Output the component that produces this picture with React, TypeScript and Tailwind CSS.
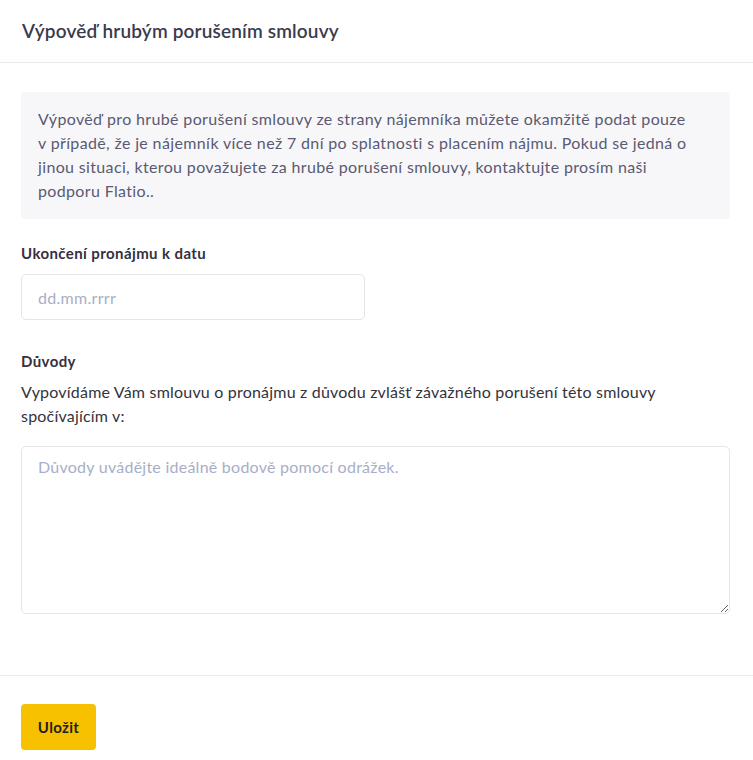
export default function App() {
  const font = { fontFamily: "Lato, 'Noto Sans', sans-serif" };
  return (
    <div className="w-[753px] min-h-[760px] bg-white" style={font}>
      <div className="h-[63px] flex items-center px-[22px] border-b border-[#e9e9ec]">
        <h1 className="text-[19px] font-semibold text-[#3a3a4d] tracking-[0.15px]">Výpověď hrubým porušením smlouvy</h1>
      </div>
      <div className="pl-[21px] pr-[23px] pt-[29px] pb-[61px]">
        <div className="bg-[#f7f7f9] rounded-[4px] pl-[17px] pr-[20px] pt-[15px] pb-[16px] text-[16px] leading-[24px] text-[#5a5a72] whitespace-nowrap tracking-[0.35px]">
          Výpověď pro hrubé porušení smlouvy ze strany nájemníka můžete okamžitě podat pouze
          <br />
          v případě, že je nájemník více než 7 dní po splatnosti s placením nájmu. Pokud se jedná o
          <br />
          jinou situaci, kterou považujete za hrubé porušení smlouvy, kontaktujte prosím naši
          <br />
          podporu Flatio..
        </div>
        <div className="mt-[24px] text-[15px] font-bold text-[#35303f] leading-[20px] tracking-[0.4px]">Ukončení pronájmu k datu</div>
        <input
          type="text"
          placeholder="dd.mm.rrrr"
          className="mt-[11px] w-[344px] h-[46px] border border-[#e4e4ea] rounded-[5px] px-[16px] text-[16px] tracking-[0.3px] placeholder:text-[#a8aec8] outline-none"
        />
        <div className="mt-[31px] text-[15px] font-bold text-[#35303f] leading-[20px] tracking-[0.4px]">Důvody</div>
        <p className="mt-[9px] text-[16px] leading-[24px] text-[#33333d] tracking-[0.2px]">
          Vypovídáme Vám smlouvu o pronájmu z důvodu zvlášť závažného porušení této smlouvy
          <br />
          spočívajícím v:
        </p>
        <textarea
          placeholder="Důvody uvádějte ideálně bodově pomocí odrážek."
          className="block mt-[18px] w-full h-[168px] border border-[#e4e4ea] rounded-[5px] px-[16px] py-[8px] text-[16px] leading-[24px] tracking-[0.25px] placeholder:text-[#a8aec8] outline-none"
        />
      </div>
      <div className="border-t border-[#e9e9ec] px-[21px] pt-[28px]">
        <button className="w-[75px] h-[46px] bg-[#f7c100] rounded-[4px] text-[15px] font-bold text-[#1f1f24] tracking-[0.3px]">Uložit</button>
      </div>
    </div>
  );
}
